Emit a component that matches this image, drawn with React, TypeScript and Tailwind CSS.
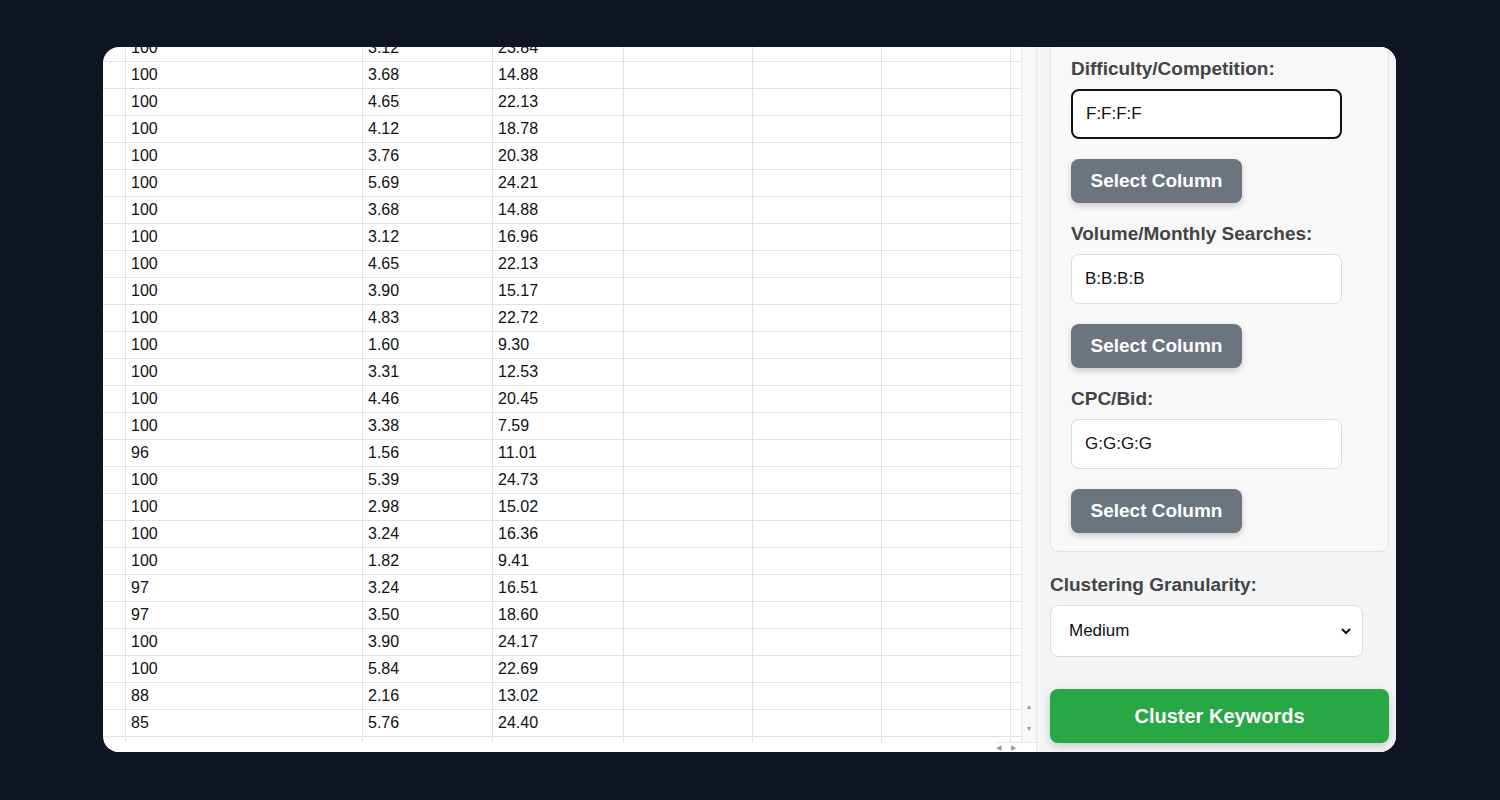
import React from "react";

const rows: [string, string, string][] = [
  ["100", "3.12", "23.84"],
  ["100", "3.68", "14.88"],
  ["100", "4.65", "22.13"],
  ["100", "4.12", "18.78"],
  ["100", "3.76", "20.38"],
  ["100", "5.69", "24.21"],
  ["100", "3.68", "14.88"],
  ["100", "3.12", "16.96"],
  ["100", "4.65", "22.13"],
  ["100", "3.90", "15.17"],
  ["100", "4.83", "22.72"],
  ["100", "1.60", "9.30"],
  ["100", "3.31", "12.53"],
  ["100", "4.46", "20.45"],
  ["100", "3.38", "7.59"],
  ["96", "1.56", "11.01"],
  ["100", "5.39", "24.73"],
  ["100", "2.98", "15.02"],
  ["100", "3.24", "16.36"],
  ["100", "1.82", "9.41"],
  ["97", "3.24", "16.51"],
  ["97", "3.50", "18.60"],
  ["100", "3.90", "24.17"],
  ["100", "5.84", "22.69"],
  ["88", "2.16", "13.02"],
  ["85", "5.76", "24.40"],
  ["100", "3.50", "11.00"],
];

const cell = "shrink-0 h-[27px] border-r border-b border-[#e2e2e2] pl-[5px] flex items-center text-[16px] text-[#111]";

function Field({ label, value, focused }: { label: string; value: string; focused?: boolean }) {
  return (
    <div className="flex flex-col">
      <div className="text-[19px] font-bold text-[#444] leading-[22px]">{label}</div>
      <div
        className={
          "mt-[9px] w-[271px] h-[50px] rounded-[8px] bg-white flex items-center px-[13px] text-[17px] text-[#111] " +
          (focused ? "border-2 border-[#111]" : "border border-[#dcdcdc]")
        }
      >
        {value}
      </div>
      <button className="mt-[20px] w-[171px] h-[44px] rounded-[8px] bg-[#6c757d] text-white font-bold text-[19px] shadow-[0_3px_6px_rgba(0,0,0,0.18)]">
        Select Column
      </button>
    </div>
  );
}

export default function App() {
  return (
    <div className="w-[1500px] h-[800px] bg-[#0f1523] pt-[47px] pl-[103px]" style={{ fontFamily: "'Liberation Sans', Arial, sans-serif" }}>
      <div className="w-[1293px] h-[705px] bg-white rounded-[16px] overflow-hidden flex">
        <div className="w-[933px] h-full flex flex-col">
          <div className="flex-1 flex overflow-hidden">
            <div className="w-[918px] overflow-hidden">
              <div className="-mt-[12px]">
                {rows.map((r, i) => (
                  <div key={i} className="flex">
                    <div className="shrink-0 w-[23px] h-[27px] border-r border-b border-[#e2e2e2]" />
                    <div className={cell + " w-[237px]"}>{r[0]}</div>
                    <div className={cell + " w-[130px]"}>{r[1]}</div>
                    <div className={cell + " w-[131px]"}>{r[2]}</div>
                    <div className={cell + " w-[129px]"} />
                    <div className={cell + " w-[129px]"} />
                    <div className={cell + " w-[129px]"} />
                    <div className={cell + " w-[11px]"} />
                  </div>
                ))}
              </div>
            </div>
            <div className="w-[15px] bg-[#f8f8f8] border-l border-[#e6e6e6] flex flex-col justify-end items-center pb-[2px] text-[7px] text-[#999] leading-[22px]">
              <div>▲</div>
              <div>▼</div>
            </div>
          </div>
          <div className="h-[10px] flex justify-end bg-white">
            <div className="w-[40px] flex gap-[10px] text-[7px] text-[#999] items-center pr-[20px] leading-none border-t border-[#e6e6e6]">
              <span>◀</span>
              <span>▶</span>
            </div>
          </div>
        </div>
        <div className="flex-1 bg-[#f3f4f5] border-l border-[#e6e6e6] pl-[13px] pr-[8px] flex flex-col">
          <div className="-mt-[20px] w-[339px] rounded-[8px] border border-[#e2e3e5] bg-[#f8f8f9] pl-[20px] pt-[30px] pb-[18px] flex flex-col gap-[20px]">
            <Field label="Difficulty/Competition:" value="F:F:F:F" focused />
            <Field label="Volume/Monthly Searches:" value="B:B:B:B" />
            <Field label="CPC/Bid:" value="G:G:G:G" />
          </div>
          <div className="mt-[22px] text-[19px] font-bold text-[#444] leading-[22px]">Clustering Granularity:</div>
          <div className="mt-[9px] w-[313px] h-[52px] rounded-[8px] border border-[#dcdcdc] bg-white flex items-center justify-between pl-[18px] pr-[10px] text-[17px] text-[#111]">
            <span>Medium</span>
            <svg width="12" height="12" viewBox="0 0 12 12"><path d="M2 4l4 4 4-4" fill="none" stroke="#111" strokeWidth="2" /></svg>
          </div>
          <button className="mt-[32px] w-[339px] h-[54px] rounded-[8px] bg-[#28a745] text-white font-bold text-[20px] shadow-[0_3px_8px_rgba(0,0,0,0.18)]">
            Cluster Keywords
          </button>
        </div>
      </div>
    </div>
  );
}
